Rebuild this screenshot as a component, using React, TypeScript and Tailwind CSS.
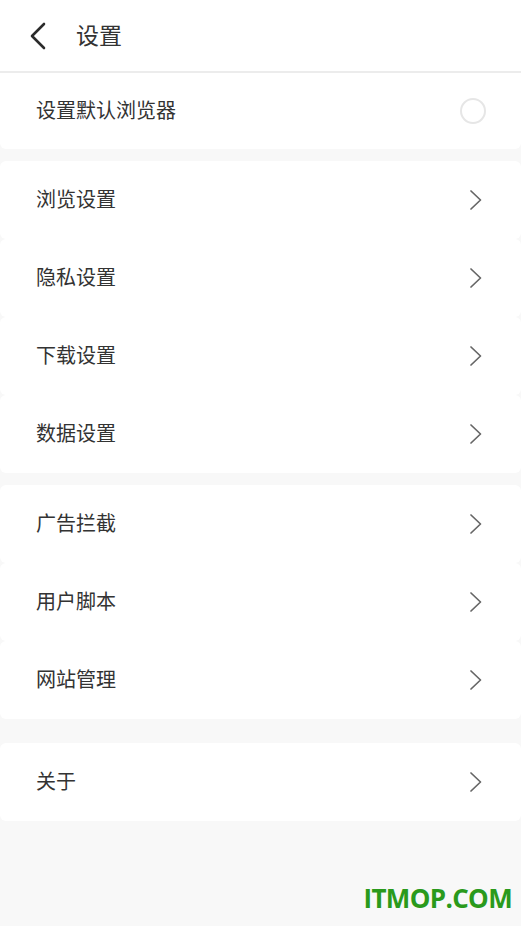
import React from 'react';

const groups: string[][] = [
  ['浏览设置', '隐私设置', '下载设置', '数据设置'],
  ['广告拦截', '用户脚本', '网站管理'],
];

const Chevron = () => (
  <svg width="14" height="22" viewBox="0 0 14 22" fill="none" className="shrink-0">
    <path d="M2 2 L11.5 11 L2 20" stroke="#666" strokeWidth="1.7" strokeLinecap="round" strokeLinejoin="round" />
  </svg>
);

const Row = ({ label }: { label: string }) => (
  <div className="h-[78px] bg-white rounded-md flex items-center justify-between pl-[36px] pr-[38px]">
    <span className="text-[20px] text-[#333]">{label}</span>
    <Chevron />
  </div>
);

export default function App() {
  return (
    <div
      className="w-[521px] h-[926px] bg-[#f8f8f8] flex flex-col relative overflow-hidden"
      style={{ fontFamily: '"Noto Sans", "Noto Sans CJK SC", sans-serif' }}
    >
      <header className="h-[73px] bg-white border-b-2 border-[#ececec] flex items-center shrink-0">
        <svg width="20" height="30" viewBox="0 0 20 30" fill="none" className="ml-[28px]">
          <path d="M16 3 L4 15 L16 27" stroke="#2b2b2b" strokeWidth="2.6" strokeLinecap="round" strokeLinejoin="round" />
        </svg>
        <h1 className="ml-[28px] text-[23px] text-[#333]">设置</h1>
      </header>

      <div className="h-[76px] bg-white rounded-b-md flex items-center justify-between pl-[36px] pr-[35px]">
        <span className="text-[20px] text-[#333]">设置默认浏览器</span>
        <span className="w-[26px] h-[26px] rounded-full border-2 border-[#e6e6e6]" />
      </div>

      {groups.map((g, i) => (
        <div key={i} className="mt-[12px] flex flex-col">
          {g.map((label) => (
            <Row key={label} label={label} />
          ))}
        </div>
      ))}

      <div className="mt-[24px]">
        <Row label="关于" />
      </div>

      <div className="absolute right-[9px] bottom-[8px] text-[26px] font-bold text-[#2a9a1c] tracking-tight" style={{ fontFamily: '"Open Sans", sans-serif' }}>
        ITMOP.COM
      </div>
    </div>
  );
}
